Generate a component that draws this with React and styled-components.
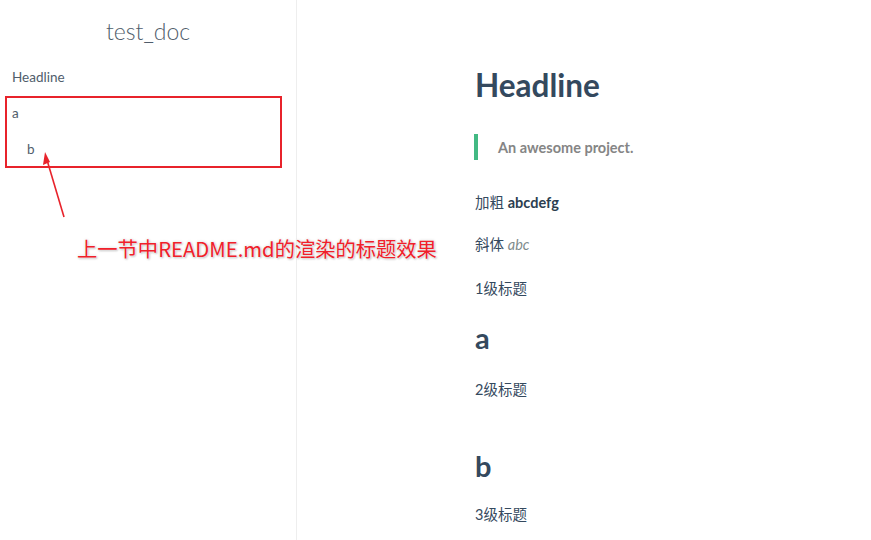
import React from "react";
import styled, { createGlobalStyle } from "styled-components";

const GlobalStyle = createGlobalStyle`
  html, body {
    margin: 0;
    padding: 0;
    background: #fff;
  }
  body {
    font-family: Lato, "Noto Sans CJK SC", sans-serif;
    -webkit-font-smoothing: antialiased;
  }
`;

const Page = styled.div`
  position: relative;
  display: flex;
  width: 871px;
  height: 540px;
  overflow: hidden;
`;

const Sidebar = styled.aside`
  width: 297px;
  flex-shrink: 0;
  border-right: 1px solid #eee;
  box-sizing: border-box;
  padding-top: 16px;
`;

const AppName = styled.h1`
  margin: 0;
  text-align: center;
  font-size: 23px;
  font-weight: 300;
  line-height: 30px;
  color: #505d6b;
`;

const NavList = styled.ul`
  list-style: none;
  margin: 13px 0 0;
  padding: 0;
`;

const NavItem = styled.li`
  font-size: 13.5px;
  line-height: 36px;
  color: #505d6b;
  padding-left: ${(p) => 12 + p.$level * 15}px;
`;

const Content = styled.main`
  flex: 1;
  padding-left: 178px;
  color: #34495e;
`;

const H1 = styled.h1`
  margin: 65px 0 0;
  font-size: 31.5px;
  line-height: 40px;
  font-weight: 700;
  color: #34495e;
`;

const Quote = styled.blockquote`
  margin: 29px 0 0 -1px;
  border-left: 4px solid #42b983;
  padding-left: 20px;
  height: 26px;
  display: flex;
  align-items: center;
  font-size: 14.5px;
  font-weight: 700;
  color: #858585;
`;

const P = styled.p`
  margin: ${(p) => p.$top}px 0 0;
  font-size: 14.5px;
  line-height: 24px;
  color: #34495e;
`;

const Strong = styled.strong`
  font-weight: 700;
  color: #2c3e50;
`;

const Em = styled.em`
  color: #7f8c8d;
`;

const H2 = styled.h2`
  margin: ${(p) => p.$top}px 0 0;
  font-size: 29px;
  line-height: 36px;
  font-weight: 700;
  color: #34495e;
`;

const Highlight = styled.div`
  position: absolute;
  left: 5px;
  top: 96px;
  width: 277px;
  height: 72px;
  box-sizing: border-box;
  border: 2px solid #e8232b;
`;

const Arrow = styled.svg`
  position: absolute;
  left: 0;
  top: 0;
  pointer-events: none;
`;

const Note = styled.div`
  position: absolute;
  left: 77px;
  top: 234px;
  font-family: "Noto Sans CJK SC", sans-serif;
  font-size: 20.3px;
  line-height: 28px;
  color: #f0202a;
  white-space: nowrap;
  text-shadow: 0 0 2px #fff, 0 0 3px #ccc, 1px 1px 2px #bbb;
`;

export default function App() {
  return (
    <Page>
      <GlobalStyle />
      <Sidebar>
        <AppName>test_doc</AppName>
        <NavList>
          <NavItem $level={0}>Headline</NavItem>
          <NavItem $level={0}>a</NavItem>
          <NavItem $level={1}>b</NavItem>
        </NavList>
      </Sidebar>
      <Content>
        <H1>Headline</H1>
        <Quote>An awesome project.</Quote>
        <P $top={31}>
          加粗 <Strong>abcdefg</Strong>
        </P>
        <P $top={18}>
          斜体 <Em>abc</Em>
        </P>
        <P $top={20}>1级标题</P>
        <H2 $top={19}>a</H2>
        <P $top={22}>2级标题</P>
        <H2 $top={46}>b</H2>
        <P $top={19}>3级标题</P>
      </Content>

      <Highlight />
      <Arrow width="100" height="230" viewBox="0 0 100 230">
        <line x1="64" y1="217" x2="47" y2="160" stroke="#e8232b" strokeWidth="1.6" />
        <polygon points="45,152 43,165 50,162" fill="#e8232b" />
      </Arrow>
      <Note>上一节中README.md的渲染的标题效果</Note>
    </Page>
  );
}
